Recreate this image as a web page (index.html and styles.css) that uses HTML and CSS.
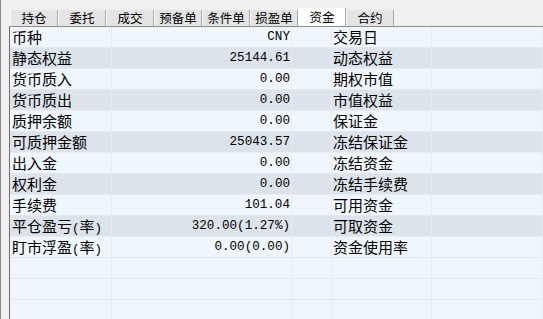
FILE: index.html
```html
<!doctype html>
<html lang="zh-CN">
<head>
  <meta charset="UTF-8">
  <title>资金</title>
  <link rel="stylesheet" href="styles.css">
</head>
<body>
<div class="app">
  <div class="side"></div>
  <div class="main">
    <ul class="tabs">
      <li>持仓</li>
      <li>委托</li>
      <li>成交</li>
      <li>预备单</li>
      <li>条件单</li>
      <li>损盈单</li>
      <li class="active">资金</li>
      <li>合约</li>
    </ul>
    <div class="grid">
      <div class="row"><span>币种</span><span class="num">CNY</span><span></span><span class="lbl">交易日</span><span></span></div>
      <div class="row"><span>静态权益</span><span class="num">25144.61</span><span></span><span class="lbl">动态权益</span><span></span></div>
      <div class="row"><span>货币质入</span><span class="num">0.00</span><span></span><span class="lbl">期权市值</span><span></span></div>
      <div class="row"><span>货币质出</span><span class="num">0.00</span><span></span><span class="lbl">市值权益</span><span></span></div>
      <div class="row"><span>质押余额</span><span class="num">0.00</span><span></span><span class="lbl">保证金</span><span></span></div>
      <div class="row"><span>可质押金额</span><span class="num">25043.57</span><span></span><span class="lbl">冻结保证金</span><span></span></div>
      <div class="row"><span>出入金</span><span class="num">0.00</span><span></span><span class="lbl">冻结资金</span><span></span></div>
      <div class="row"><span>权利金</span><span class="num">0.00</span><span></span><span class="lbl">冻结手续费</span><span></span></div>
      <div class="row"><span>手续费</span><span class="num">101.04</span><span></span><span class="lbl">可用资金</span><span></span></div>
      <div class="row"><span>平仓盈亏<i>(</i>率<i>)</i></span><span class="num">320.00(1.27%)</span><span></span><span class="lbl">可取资金</span><span></span></div>
      <div class="row"><span>盯市浮盈<i>(</i>率<i>)</i></span><span class="num">0.00(0.00)</span><span></span><span class="lbl">资金使用率</span><span></span></div>
      <div class="row empty"><span></span><span></span><span></span><span></span><span></span></div>
      <div class="row empty"><span></span><span></span><span></span><span></span><span></span></div>
      <div class="row empty"><span></span><span></span><span></span><span></span><span></span></div>
    </div>
  </div>
</div>
</body>
</html>
```

FILE: styles.css
```css
html, body {
  margin: 0;
  padding: 0;
  background: #f0f0f0;
  overflow: hidden;
}

.app {
  display: flex;
  height: 319px;
  font-family: "Noto Sans CJK SC", sans-serif;
  color: #000;
}

.side {
  width: 8px;
  border-left: 1px solid #8a8a8a;
}

.main {
  flex: 1;
  display: flex;
  flex-direction: column;
  min-height: 0;
}

.tabs {
  list-style: none;
  margin: 0;
  padding: 0 0 0 1px;
  height: 26px;
  flex: none;
  display: flex;
  align-items: flex-end;
  box-sizing: border-box;
}

.tabs li {
  width: 48px;
  height: 16px;
  box-sizing: border-box;
  background: #e4e4e4;
  border-right: 1px solid #a8a8a8;
  border-left: 1px solid #f8f8f8;
  font-size: 12.5px;
  line-height: 15px;
  text-align: center;
}

.tabs li.active {
  height: 18px;
  line-height: 18px;
  background: #fff;
  border-left: 1px solid #fff;
}

.grid {
  flex: 1;
  border-top: 1px solid #8e8e8e;
  border-left: 1px solid #6e6e6e;
  background: #f0f6fd;
  overflow: hidden;
}

.row {
  display: grid;
  grid-template-columns: 102px 180px 40px 100px 1fr;
  height: 21px;
  box-sizing: border-box;
  border-bottom: 1px solid #e4e8ee;
  background: #f0f6fd;
}

.row:nth-child(even) {
  background: #dce3ea;
  border-bottom-color: #e9edf2;
}

.row.empty {
  background: #f0f6fd;
  border-bottom-color: #e6e8ec;
}

.row span {
  border-right: 1px solid #e6ebf1;
  font-size: 15px;
  line-height: 20px;
  padding-left: 2px;
  white-space: nowrap;
  overflow: hidden;
}

.row span i {
  font-style: normal;
  font-family: "Liberation Mono", monospace;
  font-size: 12.5px;
}

.row span.num {
  font-family: "Liberation Mono", monospace;
  font-size: 12.6px;
  text-align: right;
  padding: 0 1px 0 0;
}

.row span.lbl {
  padding-left: 1px;
}
```
